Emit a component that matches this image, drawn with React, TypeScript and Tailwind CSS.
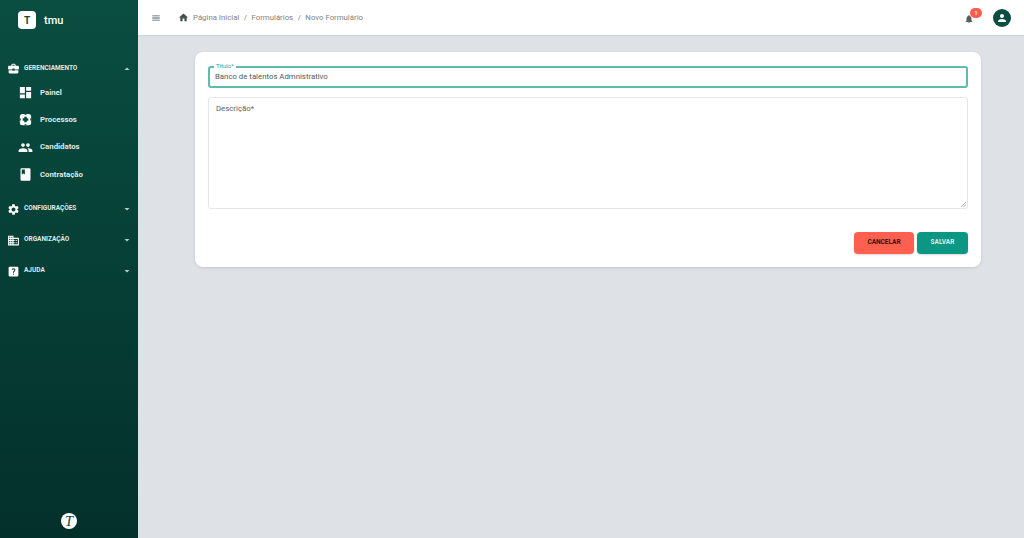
import type { ReactNode } from "react";
import {
  MdArrowDropDown,
  MdArrowDropUp,
  MdBook,
  MdBusinessCenter,
  MdDashboard,
  MdHelpCenter,
  MdHome,
  MdMenu,
  MdNotifications,
  MdOutlineBusiness,
  MdPeople,
  MdPerson,
  MdSettings,
} from "react-icons/md";

function ProcessIcon() {
  return (
    <svg className="h-[15px] w-[15px]" viewBox="0 0 24 24">
      <rect x="3" y="3" width="18" height="18" rx="4" fill="#fff" />
      <path d="M10 7.5h4v2.5h2.5v4H14v2.5h-4V14H7.5v-4H10z" fill="#0a4a3e" />
      <path d="M10.5 3h3v1.5h-3zM10.5 19.5h3V21h-3zM3 10.5h1.5v3H3zM19.5 10.5H21v3h-1.5z" fill="#0a4a3e" />
    </svg>
  );
}

function Section({ icon, label, open, className }: { icon: ReactNode; label: string; open?: boolean; className?: string }) {
  return (
    <div className={`flex h-[20px] items-center pl-[7px] pr-[5px] text-white ${className ?? ""}`}>
      <span className="flex w-[13px] justify-center text-[15px]">{icon}</span>
      <span className="ml-[4px] flex-1 text-[6.5px] font-bold text-[#dfe9e7]">{label}</span>
      {open ? <MdArrowDropUp className="text-[12px] text-[#b9ccc8]" /> : <MdArrowDropDown className="text-[12px] text-[#b9ccc8]" />}
    </div>
  );
}

function SubItem({ icon, label }: { icon: ReactNode; label: string }) {
  return (
    <div className="flex h-[27.4px] items-center pl-[18px] text-white">
      <span className="flex w-[15px] justify-center text-[15px]">{icon}</span>
      <span className="ml-[7px] text-[7.8px] font-bold text-[#dfe9e7]">{label}</span>
    </div>
  );
}

export default function App() {
  return (
    <div className="flex h-[538px] w-[1024px] overflow-hidden bg-[#dee1e6] font-['Roboto',sans-serif]">
      <aside className="flex w-[138px] shrink-0 flex-col bg-gradient-to-b from-[#0a4e41] to-[#03302a]">
        <div className="flex items-center pl-[18px] pt-[11px]">
          <div className="flex h-[18px] w-[18px] items-center justify-center rounded-[4px] bg-white text-[10px] font-bold text-[#0a4e41]">T</div>
          <span className="ml-[8px] mt-[2px] text-[11px] font-medium text-white">tmu</span>
        </div>
        <nav className="mt-[29.3px]">
          <Section icon={<MdBusinessCenter />} label="GERENCIAMENTO" open />
          <SubItem icon={<MdDashboard />} label="Painel" />
          <SubItem icon={<ProcessIcon />} label="Processos" />
          <SubItem icon={<MdPeople />} label="Candidatos" />
          <SubItem icon={<MdBook />} label="Contratação" />
          <Section icon={<MdSettings />} label="CONFIGURAÇÕES" className="mt-[11px]" />
          <Section icon={<MdOutlineBusiness />} label="ORGANIZAÇÃO" className="mt-[11px]" />
          <Section icon={<MdHelpCenter />} label="AJUDA" className="mt-[11px]" />
        </nav>
        <div className="mt-auto flex justify-center pb-[9px]">
          <div className="flex h-[16px] w-[16px] items-center justify-center rounded-full bg-white font-['Liberation_Serif',serif] text-[15px] italic leading-none text-[#0a4e41]">T</div>
        </div>
      </aside>

      <div className="flex min-w-0 flex-1 flex-col">
        <header className="flex h-[35px] shrink-0 items-center bg-white pl-[13px] pr-[13px] shadow-[0_1px_1px_rgba(0,0,0,0.06)]">
          <MdMenu className="text-[10px] text-[#4d5a66]" />
          <MdHome className="ml-[17px] text-[11px] text-[#44524c]" />
          <div className="ml-[4px] flex items-center text-[7.8px] text-[#7b8580]">
            <span className="text-[#86817c]">Página Inicial</span>
            <span className="mx-[4.5px]">/</span>
            <span className="text-[#86817c]">Formulários</span>
            <span className="mx-[4.5px]">/</span>
            <span>Novo Formulário</span>
          </div>
          <div className="relative ml-auto mr-[19px] flex translate-y-[1px]">
            <MdNotifications className="text-[10px] text-[#56615c]" />
            <span className="absolute -right-[8px] -top-[6px] flex h-[10px] w-[12px] items-center justify-center rounded-full bg-[#ff5c4d] text-[6px] font-medium text-white">1</span>
          </div>
          <div className="flex h-[18px] w-[18px] items-center justify-center rounded-full bg-[#0a4e41] text-white">
            <MdPerson className="text-[12px]" />
          </div>
        </header>

        <main className="pl-[57px] pt-[17px]">
          <div className="flex h-[215px] w-[786px] flex-col rounded-[8px] bg-white px-[13px] pt-[14px] shadow-[0_1px_3px_rgba(0,0,0,0.12)]">
            <div className="relative flex h-[22px] items-center rounded-[3px] border-2 border-[#5fbbae] px-[5px] text-[7.8px] text-[#4f5b57]">
              <span className="absolute -top-[6px] left-[4px] bg-white px-[2px] text-[6px] leading-[8px] text-[#2f9e8c]">Título*</span>
              Banco de talentos Admnistrativo
            </div>
            <div className="relative mt-[9px] h-[112px] rounded-[3px] border border-[#e4e6e9] px-[7px] pt-[5px] text-[7.8px] text-[#5b6461]">
              Descrição*
              <svg className="absolute bottom-[1px] right-[1px] h-[5px] w-[5px]" viewBox="0 0 5 5">
                <path d="M0 5 L5 0 M2.5 5 L5 2.5" stroke="#9a9a9a" strokeWidth="0.7" />
              </svg>
            </div>
            <div className="mt-[23px] flex justify-end gap-[3px]">
              <button className="h-[22px] w-[60px] rounded-[4px] bg-[#ff5f4e] text-[6.5px] font-bold text-[#2b1512] shadow-[0_1px_2px_rgba(0,0,0,0.15)]">CANCELAR</button>
              <button className="h-[22px] w-[51px] rounded-[4px] bg-[#0b9784] text-[6.5px] font-bold text-[#d8f0ec] shadow-[0_1px_2px_rgba(0,0,0,0.15)]">SALVAR</button>
            </div>
          </div>
        </main>
      </div>
    </div>
  );
}
